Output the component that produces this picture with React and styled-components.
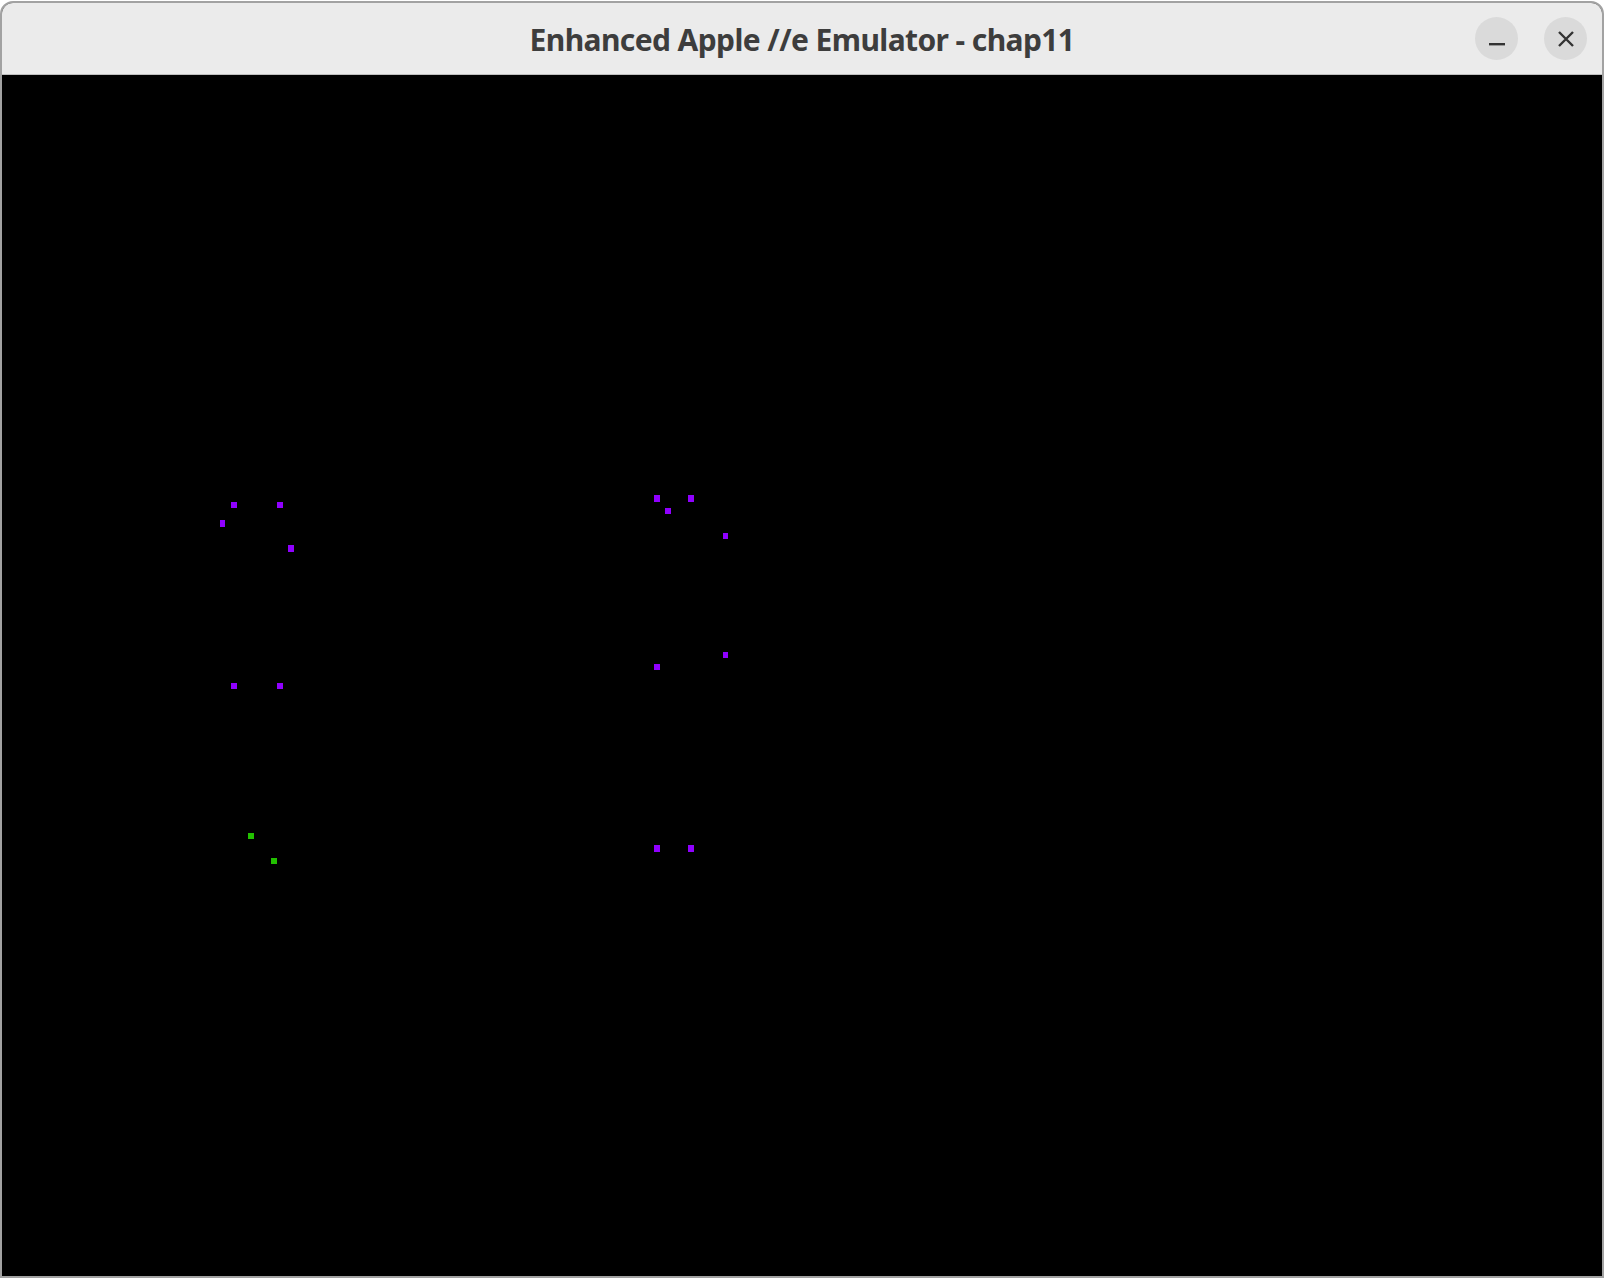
import React from 'react'
import styled, { createGlobalStyle } from 'styled-components'

const Global = createGlobalStyle`
  html, body { margin: 0; padding: 0; background: #ffffff; }
  #root { height: 1278px; }
`;

const Window = styled.div`
  box-sizing: border-box;
  margin-top: 1px;
  height: 1277px;
  width: 1604px;
  border: 2px solid #a2a2a2;
  border-radius: 13px 13px 0 0;
  overflow: hidden;
  display: flex;
  flex-direction: column;
  background: #000;
`;

const TitleBar = styled.div`
  height: 71px;
  flex: none;
  background: #ebebeb;
  border-bottom: 1px solid #c0c0c0;
  display: grid;
  grid-template-columns: 1fr auto 1fr;
  align-items: center;
`;

const Title = styled.div`
  grid-column: 2;
  font-family: "Noto Sans", "DejaVu Sans", sans-serif;
  font-weight: 700;
  font-size: 30px;
  letter-spacing: -0.6px;
  color: #3d3d3d;
  padding-top: 1px;
  white-space: nowrap;
`;

const Controls = styled.div`
  grid-column: 3;
  display: flex;
  justify-content: flex-end;
  gap: 26px;
  padding-right: 15px;
`;

const RoundButton = styled.div`
  width: 43px;
  height: 43px;
  border-radius: 50%;
  background: #dadada;
  display: flex;
  align-items: center;
  justify-content: center;
`;

const Screen = styled.div`
  flex: 1;
  background: #000;
`;

const PURPLE = '#9000ff'
const GREEN = '#22c000'

const dots = [
  [229, 427, 6, 6, PURPLE],
  [275, 427, 6, 6, PURPLE],
  [218, 445, 5, 7, PURPLE],
  [286, 470, 6, 7, PURPLE],
  [652, 420, 6, 7, PURPLE],
  [686, 420, 6, 7, PURPLE],
  [663, 433, 6, 6, PURPLE],
  [721, 458, 5, 6, PURPLE],
  [229, 608, 6, 6, PURPLE],
  [275, 608, 6, 6, PURPLE],
  [652, 589, 6, 6, PURPLE],
  [721, 577, 5, 6, PURPLE],
  [246, 758, 6, 6, GREEN],
  [269, 783, 6, 6, GREEN],
  [652, 770, 6, 7, PURPLE],
  [686, 770, 6, 7, PURPLE],
]

const App = () => {
  return (
    <>
      <Global />
      <Window>
        <TitleBar>
          <Title>Enhanced Apple //e Emulator - chap11</Title>
          <Controls>
            <RoundButton>
              <svg width="16" height="16" viewBox="0 0 16 16">
                <rect x="0" y="12" width="16" height="2.4" fill="#333" />
              </svg>
            </RoundButton>
            <RoundButton>
              <svg width="16" height="16" viewBox="0 0 16 16">
                <path d="M1 1 L15 15 M15 1 L1 15" stroke="#333" strokeWidth="2.4" />
              </svg>
            </RoundButton>
          </Controls>
        </TitleBar>
        <Screen>
          <svg width="1600" height="1201" shapeRendering="crispEdges">
            {dots.map(([x, y, w, h, c], i) => (
              <rect key={i} x={x} y={y} width={w} height={h} fill={c} />
            ))}
          </svg>
        </Screen>
      </Window>
    </>
  )
}

export default App
